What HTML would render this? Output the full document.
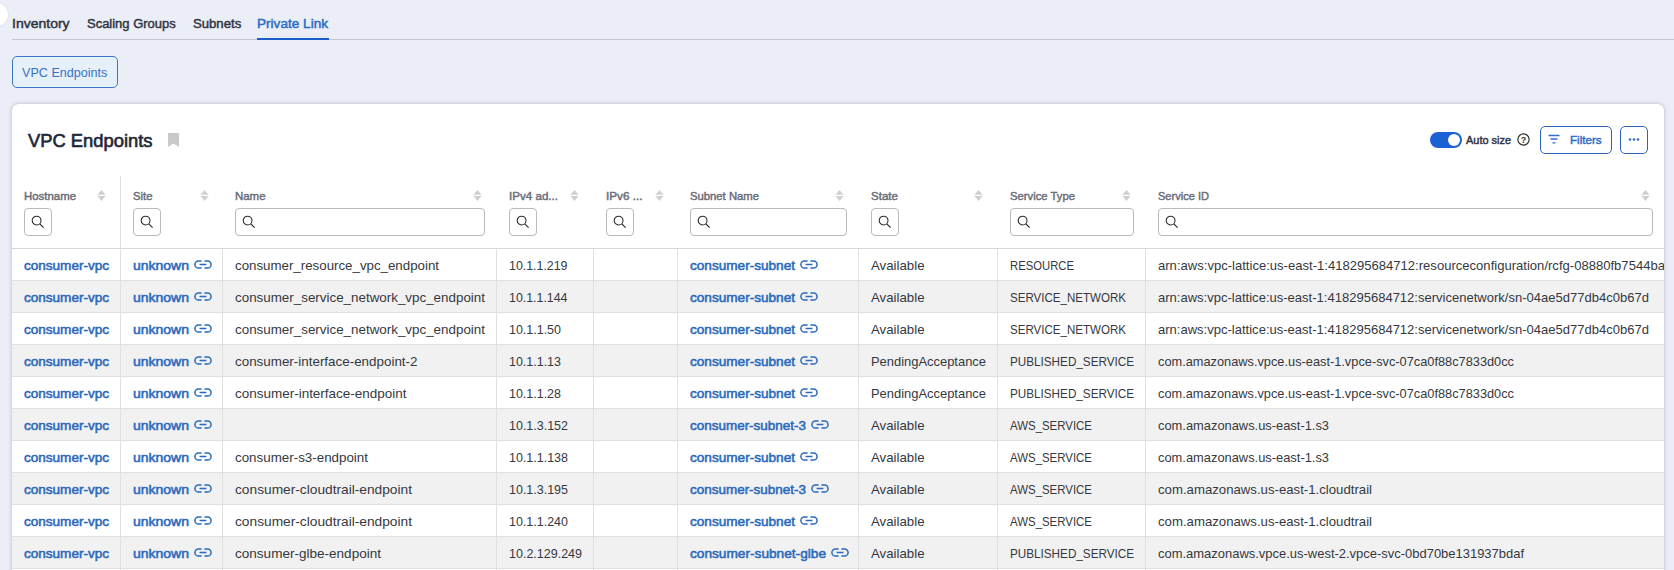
<!DOCTYPE html>
<html><head><meta charset="utf-8"><style>
*{box-sizing:border-box;margin:0;padding:0}
html,body{width:1674px;height:570px;overflow:hidden;background:#ebeef6;font-family:"Liberation Sans", sans-serif;position:relative}
.a{position:absolute}
.t{position:absolute;white-space:pre;transform-origin:0 0}
.ic{position:absolute}
.sb{position:absolute;top:208px;height:28px;border:1px solid #b9b9bd;border-radius:4px;background:#fff}
.sb svg{position:absolute;left:6px;top:6px}
.clip{position:absolute;left:0;top:0;width:1664px;height:570px;overflow:hidden}
</style></head><body>
<div class="a" style="left:-15px;top:3px;width:23px;height:23px;border-radius:50%;background:#fff;box-shadow:0 0 2px rgba(0,0,0,.12)"></div>
<div class="a" style="left:12px;top:39px;width:1662px;height:1px;background:#c5c8ce"></div>
<div class="a" style="left:257px;top:38px;width:72px;height:2px;background:#1a5cc8"></div>
<div class="a" style="left:12px;top:56px;width:106px;height:32px;border:1.5px solid #3c76c6;border-radius:5px;background:#e6f0fb"></div>
<div class="a" style="left:12px;top:104px;width:1652px;height:520px;background:#fff;border-radius:6px;box-shadow:0 0 5px rgba(0,0,0,.18),0 0 1px rgba(0,0,0,.22)"></div>
<svg class="ic" style="left:168px;top:133px" width="11" height="14" viewBox="0 0 11 14"><path d="M0 0H11V14L5.5 10.5L0 14Z" fill="#c9c9c9"/></svg>
<div class="a" style="left:1430px;top:132px;width:32px;height:16px;border-radius:8px;background:#1a62d4"></div>
<div class="a" style="left:1448px;top:134px;width:12px;height:12px;border-radius:50%;background:#fff"></div>
<svg class="ic" style="left:1517px;top:133px" width="13" height="13" viewBox="0 0 13 13"><circle cx="6.5" cy="6.5" r="5.6" fill="none" stroke="#333" stroke-width="1.2"/><text x="6.5" y="10" text-anchor="middle" font-family="Liberation Sans" font-weight="bold" font-size="9" fill="#333">?</text></svg>
<div class="a" style="left:1540px;top:126px;width:72px;height:28px;border:1.5px solid #2b67ba;border-radius:5px;background:#fff"></div>
<svg class="ic" style="left:1548px;top:134px" width="12" height="11" viewBox="0 0 12 11"><path d="M0.5 1.5H11.5M2.5 5H9.5M4.5 8.8H7.5" stroke="#2f6fc6" stroke-width="1.3"/></svg>
<div class="a" style="left:1620px;top:126px;width:28px;height:28px;border:1.5px solid #2b67ba;border-radius:5px;background:#fff"></div>
<svg class="ic" style="left:1628px;top:137px" width="12" height="5" viewBox="0 0 12 5"><circle cx="2" cy="2.5" r="1.3" fill="#2f6fc6"/><circle cx="6" cy="2.5" r="1.3" fill="#2f6fc6"/><circle cx="10" cy="2.5" r="1.3" fill="#2f6fc6"/></svg>

<div class="sb" style="left:24px;width:28px"><svg width="14" height="14" viewBox="0 0 14 14"><circle cx="5.6" cy="5.6" r="4.4" fill="none" stroke="#2a2a2a" stroke-width="1.05"/><path d="M8.8 8.8L12.6 12.6" stroke="#2a2a2a" stroke-width="1.2"/></svg></div>
<svg class="ic" style="left:97px;top:190px" width="9" height="12" viewBox="0 0 9 12"><path d="M4.5 0L8.6 4.8H0.4Z M0.4 6.1H8.6L4.5 10.9Z" fill="#cfd0d4"/></svg>
<div class="sb" style="left:133px;width:28px"><svg width="14" height="14" viewBox="0 0 14 14"><circle cx="5.6" cy="5.6" r="4.4" fill="none" stroke="#2a2a2a" stroke-width="1.05"/><path d="M8.8 8.8L12.6 12.6" stroke="#2a2a2a" stroke-width="1.2"/></svg></div>
<svg class="ic" style="left:199.5px;top:190px" width="9" height="12" viewBox="0 0 9 12"><path d="M4.5 0L8.6 4.8H0.4Z M0.4 6.1H8.6L4.5 10.9Z" fill="#cfd0d4"/></svg>
<div class="sb" style="left:235px;width:250px"><svg width="14" height="14" viewBox="0 0 14 14"><circle cx="5.6" cy="5.6" r="4.4" fill="none" stroke="#2a2a2a" stroke-width="1.05"/><path d="M8.8 8.8L12.6 12.6" stroke="#2a2a2a" stroke-width="1.2"/></svg></div>
<svg class="ic" style="left:473px;top:190px" width="9" height="12" viewBox="0 0 9 12"><path d="M4.5 0L8.6 4.8H0.4Z M0.4 6.1H8.6L4.5 10.9Z" fill="#cfd0d4"/></svg>
<div class="sb" style="left:509px;width:28px"><svg width="14" height="14" viewBox="0 0 14 14"><circle cx="5.6" cy="5.6" r="4.4" fill="none" stroke="#2a2a2a" stroke-width="1.05"/><path d="M8.8 8.8L12.6 12.6" stroke="#2a2a2a" stroke-width="1.2"/></svg></div>
<svg class="ic" style="left:570px;top:190px" width="9" height="12" viewBox="0 0 9 12"><path d="M4.5 0L8.6 4.8H0.4Z M0.4 6.1H8.6L4.5 10.9Z" fill="#cfd0d4"/></svg>
<div class="sb" style="left:606px;width:28px"><svg width="14" height="14" viewBox="0 0 14 14"><circle cx="5.6" cy="5.6" r="4.4" fill="none" stroke="#2a2a2a" stroke-width="1.05"/><path d="M8.8 8.8L12.6 12.6" stroke="#2a2a2a" stroke-width="1.2"/></svg></div>
<svg class="ic" style="left:654.5px;top:190px" width="9" height="12" viewBox="0 0 9 12"><path d="M4.5 0L8.6 4.8H0.4Z M0.4 6.1H8.6L4.5 10.9Z" fill="#cfd0d4"/></svg>
<div class="sb" style="left:690px;width:157px"><svg width="14" height="14" viewBox="0 0 14 14"><circle cx="5.6" cy="5.6" r="4.4" fill="none" stroke="#2a2a2a" stroke-width="1.05"/><path d="M8.8 8.8L12.6 12.6" stroke="#2a2a2a" stroke-width="1.2"/></svg></div>
<svg class="ic" style="left:835px;top:190px" width="9" height="12" viewBox="0 0 9 12"><path d="M4.5 0L8.6 4.8H0.4Z M0.4 6.1H8.6L4.5 10.9Z" fill="#cfd0d4"/></svg>
<div class="sb" style="left:871px;width:28px"><svg width="14" height="14" viewBox="0 0 14 14"><circle cx="5.6" cy="5.6" r="4.4" fill="none" stroke="#2a2a2a" stroke-width="1.05"/><path d="M8.8 8.8L12.6 12.6" stroke="#2a2a2a" stroke-width="1.2"/></svg></div>
<svg class="ic" style="left:974px;top:190px" width="9" height="12" viewBox="0 0 9 12"><path d="M4.5 0L8.6 4.8H0.4Z M0.4 6.1H8.6L4.5 10.9Z" fill="#cfd0d4"/></svg>
<div class="sb" style="left:1010px;width:124px"><svg width="14" height="14" viewBox="0 0 14 14"><circle cx="5.6" cy="5.6" r="4.4" fill="none" stroke="#2a2a2a" stroke-width="1.05"/><path d="M8.8 8.8L12.6 12.6" stroke="#2a2a2a" stroke-width="1.2"/></svg></div>
<svg class="ic" style="left:1122px;top:190px" width="9" height="12" viewBox="0 0 9 12"><path d="M4.5 0L8.6 4.8H0.4Z M0.4 6.1H8.6L4.5 10.9Z" fill="#cfd0d4"/></svg>
<div class="sb" style="left:1158px;width:495px"><svg width="14" height="14" viewBox="0 0 14 14"><circle cx="5.6" cy="5.6" r="4.4" fill="none" stroke="#2a2a2a" stroke-width="1.05"/><path d="M8.8 8.8L12.6 12.6" stroke="#2a2a2a" stroke-width="1.2"/></svg></div>
<svg class="ic" style="left:1641px;top:190px" width="9" height="12" viewBox="0 0 9 12"><path d="M4.5 0L8.6 4.8H0.4Z M0.4 6.1H8.6L4.5 10.9Z" fill="#cfd0d4"/></svg>
<div class="a" style="left:12px;top:248px;width:1652px;height:1px;background:#d6d6d6"></div>
<div class="a" style="left:120px;top:176px;width:1px;height:72px;background:#e0e0e0"></div>
<div class="a" style="left:12px;top:249px;width:1652px;height:31px;background:#fff"></div>
<div class="a" style="left:12px;top:280px;width:1652px;height:1px;background:#e0e0e0"></div>
<div class="a" style="left:12px;top:281px;width:1652px;height:31px;background:#f1f1f1"></div>
<div class="a" style="left:12px;top:312px;width:1652px;height:1px;background:#e0e0e0"></div>
<div class="a" style="left:12px;top:313px;width:1652px;height:31px;background:#fff"></div>
<div class="a" style="left:12px;top:344px;width:1652px;height:1px;background:#e0e0e0"></div>
<div class="a" style="left:12px;top:345px;width:1652px;height:31px;background:#f1f1f1"></div>
<div class="a" style="left:12px;top:376px;width:1652px;height:1px;background:#e0e0e0"></div>
<div class="a" style="left:12px;top:377px;width:1652px;height:31px;background:#fff"></div>
<div class="a" style="left:12px;top:408px;width:1652px;height:1px;background:#e0e0e0"></div>
<div class="a" style="left:12px;top:409px;width:1652px;height:31px;background:#f1f1f1"></div>
<div class="a" style="left:12px;top:440px;width:1652px;height:1px;background:#e0e0e0"></div>
<div class="a" style="left:12px;top:441px;width:1652px;height:31px;background:#fff"></div>
<div class="a" style="left:12px;top:472px;width:1652px;height:1px;background:#e0e0e0"></div>
<div class="a" style="left:12px;top:473px;width:1652px;height:31px;background:#f1f1f1"></div>
<div class="a" style="left:12px;top:504px;width:1652px;height:1px;background:#e0e0e0"></div>
<div class="a" style="left:12px;top:505px;width:1652px;height:31px;background:#fff"></div>
<div class="a" style="left:12px;top:536px;width:1652px;height:1px;background:#e0e0e0"></div>
<div class="a" style="left:12px;top:537px;width:1652px;height:31px;background:#f1f1f1"></div>
<div class="a" style="left:12px;top:568px;width:1652px;height:1px;background:#e0e0e0"></div>
<div class="a" style="left:120px;top:249px;width:1px;height:321px;background:#e0e0e0"></div>
<div class="a" style="left:222px;top:249px;width:1px;height:321px;background:#e0e0e0"></div>
<div class="a" style="left:496px;top:249px;width:1px;height:321px;background:#e0e0e0"></div>
<div class="a" style="left:593px;top:249px;width:1px;height:321px;background:#e0e0e0"></div>
<div class="a" style="left:677px;top:249px;width:1px;height:321px;background:#e0e0e0"></div>
<div class="a" style="left:858px;top:249px;width:1px;height:321px;background:#e0e0e0"></div>
<div class="a" style="left:997px;top:249px;width:1px;height:321px;background:#e0e0e0"></div>
<div class="a" style="left:1145px;top:249px;width:1px;height:321px;background:#e0e0e0"></div>
<div class="clip">
<div class="t" style="left:12px;top:17px;font-size:13px;line-height:13px;font-weight:normal;-webkit-text-stroke:0.45px #2f3441;color:#2f3441;transform:scaleX(1.0770)">Inventory</div>
<div class="t" style="left:87px;top:17px;font-size:13px;line-height:13px;font-weight:normal;-webkit-text-stroke:0.45px #2f3441;color:#2f3441;transform:scaleX(0.9979)">Scaling Groups</div>
<div class="t" style="left:193px;top:17px;font-size:13px;line-height:13px;font-weight:normal;-webkit-text-stroke:0.45px #2f3441;color:#2f3441;transform:scaleX(1.0104)">Subnets</div>
<div class="t" style="left:257px;top:17px;font-size:13px;line-height:13px;font-weight:normal;-webkit-text-stroke:0.45px #2c6cc4;color:#2c6cc4;transform:scaleX(1.0453)">Private Link</div>
<div class="t" style="left:22px;top:66px;font-size:13px;line-height:13px;font-weight:normal;color:#3a72c2;transform:scaleX(0.9686)">VPC Endpoints</div>
<div class="t" style="left:28px;top:133px;font-size:17.5px;line-height:17.5px;font-weight:normal;-webkit-text-stroke:0.6px #1f2738;color:#1f2738;transform:scaleX(1.0490)">VPC Endpoints</div>
<div class="t" style="left:1466px;top:135px;font-size:11px;line-height:11px;font-weight:normal;-webkit-text-stroke:0.45px #2f3441;color:#2f3441;transform:scaleX(0.9945)">Auto size</div>
<div class="t" style="left:1570px;top:135px;font-size:11.5px;line-height:11.5px;font-weight:normal;-webkit-text-stroke:0.45px #2c6cc4;color:#2c6cc4;transform:scaleX(1.0092)">Filters</div>
<div class="t" style="left:24px;top:191px;font-size:11.5px;line-height:11.5px;font-weight:normal;-webkit-text-stroke:0.45px #6a6d78;color:#6a6d78;transform:scaleX(0.9920)">Hostname</div>
<div class="t" style="left:133px;top:191px;font-size:11.5px;line-height:11.5px;font-weight:normal;-webkit-text-stroke:0.45px #6a6d78;color:#6a6d78;transform:scaleX(0.9835)">Site</div>
<div class="t" style="left:235px;top:191px;font-size:11.5px;line-height:11.5px;font-weight:normal;-webkit-text-stroke:0.45px #6a6d78;color:#6a6d78;transform:scaleX(0.9939)">Name</div>
<div class="t" style="left:509px;top:191px;font-size:11.5px;line-height:11.5px;font-weight:normal;-webkit-text-stroke:0.45px #6a6d78;color:#6a6d78;transform:scaleX(1.0084)">IPv4 ad...</div>
<div class="t" style="left:606px;top:191px;font-size:11.5px;line-height:11.5px;font-weight:normal;-webkit-text-stroke:0.45px #6a6d78;color:#6a6d78;transform:scaleX(1.0196)">IPv6 ...</div>
<div class="t" style="left:690px;top:191px;font-size:11.5px;line-height:11.5px;font-weight:normal;-webkit-text-stroke:0.45px #6a6d78;color:#6a6d78;transform:scaleX(0.9811)">Subnet Name</div>
<div class="t" style="left:871px;top:191px;font-size:11.5px;line-height:11.5px;font-weight:normal;-webkit-text-stroke:0.45px #6a6d78;color:#6a6d78;transform:scaleX(1.0052)">State</div>
<div class="t" style="left:1010px;top:191px;font-size:11.5px;line-height:11.5px;font-weight:normal;-webkit-text-stroke:0.45px #6a6d78;color:#6a6d78;transform:scaleX(0.9809)">Service Type</div>
<div class="t" style="left:1158px;top:191px;font-size:11.5px;line-height:11.5px;font-weight:normal;-webkit-text-stroke:0.45px #6a6d78;color:#6a6d78;transform:scaleX(0.9614)">Service ID</div>
<div class="t" style="left:24px;top:259px;font-size:13.5px;line-height:13.5px;font-weight:normal;-webkit-text-stroke:0.55px #2a69bc;color:#2a69bc;transform:scaleX(1.0026)">consumer-vpc</div>
<div class="t" style="left:133px;top:259px;font-size:13.5px;line-height:13.5px;font-weight:normal;-webkit-text-stroke:0.55px #2a69bc;color:#2a69bc;transform:scaleX(1.0361)">unknown</div>
<div class="t" style="left:235px;top:259px;font-size:13.5px;line-height:13.5px;font-weight:normal;color:#35383e;transform:scaleX(0.9848)">consumer_resource_vpc_endpoint</div>
<div class="t" style="left:509px;top:259px;font-size:13.5px;line-height:13.5px;font-weight:normal;color:#35383e;transform:scaleX(0.9167)">10.1.1.219</div>
<div class="t" style="left:690px;top:259px;font-size:13.5px;line-height:13.5px;font-weight:normal;-webkit-text-stroke:0.55px #2a69bc;color:#2a69bc;transform:scaleX(1.0066)">consumer-subnet</div>
<div class="t" style="left:871px;top:259px;font-size:13.5px;line-height:13.5px;font-weight:normal;color:#35383e;transform:scaleX(0.9808)">Available</div>
<div class="t" style="left:1010px;top:259px;font-size:13.5px;line-height:13.5px;font-weight:normal;color:#35383e;transform:scaleX(0.8364)">RESOURCE</div>
<div class="t" style="left:1158px;top:259px;font-size:13.5px;line-height:13.5px;font-weight:normal;color:#35383e;transform:scaleX(0.9678)">arn:aws:vpc-lattice:us-east-1:418295684712:resourceconfiguration/rcfg-08880fb7544ba</div>
<div class="t" style="left:24px;top:291px;font-size:13.5px;line-height:13.5px;font-weight:normal;-webkit-text-stroke:0.55px #2a69bc;color:#2a69bc;transform:scaleX(1.0026)">consumer-vpc</div>
<div class="t" style="left:133px;top:291px;font-size:13.5px;line-height:13.5px;font-weight:normal;-webkit-text-stroke:0.55px #2a69bc;color:#2a69bc;transform:scaleX(1.0361)">unknown</div>
<div class="t" style="left:235px;top:291px;font-size:13.5px;line-height:13.5px;font-weight:normal;color:#35383e;transform:scaleX(0.9914)">consumer_service_network_vpc_endpoint</div>
<div class="t" style="left:509px;top:291px;font-size:13.5px;line-height:13.5px;font-weight:normal;color:#35383e;transform:scaleX(0.9167)">10.1.1.144</div>
<div class="t" style="left:690px;top:291px;font-size:13.5px;line-height:13.5px;font-weight:normal;-webkit-text-stroke:0.55px #2a69bc;color:#2a69bc;transform:scaleX(1.0066)">consumer-subnet</div>
<div class="t" style="left:871px;top:291px;font-size:13.5px;line-height:13.5px;font-weight:normal;color:#35383e;transform:scaleX(0.9808)">Available</div>
<div class="t" style="left:1010px;top:291px;font-size:13.5px;line-height:13.5px;font-weight:normal;color:#35383e;transform:scaleX(0.8559)">SERVICE_NETWORK</div>
<div class="t" style="left:1158px;top:291px;font-size:13.5px;line-height:13.5px;font-weight:normal;color:#35383e;transform:scaleX(0.9650)">arn:aws:vpc-lattice:us-east-1:418295684712:servicenetwork/sn-04ae5d77db4c0b67d</div>
<div class="t" style="left:24px;top:323px;font-size:13.5px;line-height:13.5px;font-weight:normal;-webkit-text-stroke:0.55px #2a69bc;color:#2a69bc;transform:scaleX(1.0026)">consumer-vpc</div>
<div class="t" style="left:133px;top:323px;font-size:13.5px;line-height:13.5px;font-weight:normal;-webkit-text-stroke:0.55px #2a69bc;color:#2a69bc;transform:scaleX(1.0361)">unknown</div>
<div class="t" style="left:235px;top:323px;font-size:13.5px;line-height:13.5px;font-weight:normal;color:#35383e;transform:scaleX(0.9914)">consumer_service_network_vpc_endpoint</div>
<div class="t" style="left:509px;top:323px;font-size:13.5px;line-height:13.5px;font-weight:normal;color:#35383e;transform:scaleX(0.9234)">10.1.1.50</div>
<div class="t" style="left:690px;top:323px;font-size:13.5px;line-height:13.5px;font-weight:normal;-webkit-text-stroke:0.55px #2a69bc;color:#2a69bc;transform:scaleX(1.0066)">consumer-subnet</div>
<div class="t" style="left:871px;top:323px;font-size:13.5px;line-height:13.5px;font-weight:normal;color:#35383e;transform:scaleX(0.9808)">Available</div>
<div class="t" style="left:1010px;top:323px;font-size:13.5px;line-height:13.5px;font-weight:normal;color:#35383e;transform:scaleX(0.8559)">SERVICE_NETWORK</div>
<div class="t" style="left:1158px;top:323px;font-size:13.5px;line-height:13.5px;font-weight:normal;color:#35383e;transform:scaleX(0.9650)">arn:aws:vpc-lattice:us-east-1:418295684712:servicenetwork/sn-04ae5d77db4c0b67d</div>
<div class="t" style="left:24px;top:355px;font-size:13.5px;line-height:13.5px;font-weight:normal;-webkit-text-stroke:0.55px #2a69bc;color:#2a69bc;transform:scaleX(1.0026)">consumer-vpc</div>
<div class="t" style="left:133px;top:355px;font-size:13.5px;line-height:13.5px;font-weight:normal;-webkit-text-stroke:0.55px #2a69bc;color:#2a69bc;transform:scaleX(1.0361)">unknown</div>
<div class="t" style="left:235px;top:355px;font-size:13.5px;line-height:13.5px;font-weight:normal;color:#35383e;transform:scaleX(0.9926)">consumer-interface-endpoint-2</div>
<div class="t" style="left:509px;top:355px;font-size:13.5px;line-height:13.5px;font-weight:normal;color:#35383e;transform:scaleX(0.9234)">10.1.1.13</div>
<div class="t" style="left:690px;top:355px;font-size:13.5px;line-height:13.5px;font-weight:normal;-webkit-text-stroke:0.55px #2a69bc;color:#2a69bc;transform:scaleX(1.0066)">consumer-subnet</div>
<div class="t" style="left:871px;top:355px;font-size:13.5px;line-height:13.5px;font-weight:normal;color:#35383e;transform:scaleX(0.9576)">PendingAcceptance</div>
<div class="t" style="left:1010px;top:355px;font-size:13.5px;line-height:13.5px;font-weight:normal;color:#35383e;transform:scaleX(0.8668)">PUBLISHED_SERVICE</div>
<div class="t" style="left:1158px;top:355px;font-size:13.5px;line-height:13.5px;font-weight:normal;color:#35383e;transform:scaleX(0.9470)">com.amazonaws.vpce.us-east-1.vpce-svc-07ca0f88c7833d0cc</div>
<div class="t" style="left:24px;top:387px;font-size:13.5px;line-height:13.5px;font-weight:normal;-webkit-text-stroke:0.55px #2a69bc;color:#2a69bc;transform:scaleX(1.0026)">consumer-vpc</div>
<div class="t" style="left:133px;top:387px;font-size:13.5px;line-height:13.5px;font-weight:normal;-webkit-text-stroke:0.55px #2a69bc;color:#2a69bc;transform:scaleX(1.0361)">unknown</div>
<div class="t" style="left:235px;top:387px;font-size:13.5px;line-height:13.5px;font-weight:normal;color:#35383e;transform:scaleX(0.9980)">consumer-interface-endpoint</div>
<div class="t" style="left:509px;top:387px;font-size:13.5px;line-height:13.5px;font-weight:normal;color:#35383e;transform:scaleX(0.9234)">10.1.1.28</div>
<div class="t" style="left:690px;top:387px;font-size:13.5px;line-height:13.5px;font-weight:normal;-webkit-text-stroke:0.55px #2a69bc;color:#2a69bc;transform:scaleX(1.0066)">consumer-subnet</div>
<div class="t" style="left:871px;top:387px;font-size:13.5px;line-height:13.5px;font-weight:normal;color:#35383e;transform:scaleX(0.9576)">PendingAcceptance</div>
<div class="t" style="left:1010px;top:387px;font-size:13.5px;line-height:13.5px;font-weight:normal;color:#35383e;transform:scaleX(0.8668)">PUBLISHED_SERVICE</div>
<div class="t" style="left:1158px;top:387px;font-size:13.5px;line-height:13.5px;font-weight:normal;color:#35383e;transform:scaleX(0.9470)">com.amazonaws.vpce.us-east-1.vpce-svc-07ca0f88c7833d0cc</div>
<div class="t" style="left:24px;top:419px;font-size:13.5px;line-height:13.5px;font-weight:normal;-webkit-text-stroke:0.55px #2a69bc;color:#2a69bc;transform:scaleX(1.0026)">consumer-vpc</div>
<div class="t" style="left:133px;top:419px;font-size:13.5px;line-height:13.5px;font-weight:normal;-webkit-text-stroke:0.55px #2a69bc;color:#2a69bc;transform:scaleX(1.0361)">unknown</div>
<div class="t" style="left:509px;top:419px;font-size:13.5px;line-height:13.5px;font-weight:normal;color:#35383e;transform:scaleX(0.9246)">10.1.3.152</div>
<div class="t" style="left:690px;top:419px;font-size:13.5px;line-height:13.5px;font-weight:normal;-webkit-text-stroke:0.55px #2a69bc;color:#2a69bc;transform:scaleX(0.9973)">consumer-subnet-3</div>
<div class="t" style="left:871px;top:419px;font-size:13.5px;line-height:13.5px;font-weight:normal;color:#35383e;transform:scaleX(0.9808)">Available</div>
<div class="t" style="left:1010px;top:419px;font-size:13.5px;line-height:13.5px;font-weight:normal;color:#35383e;transform:scaleX(0.8473)">AWS_SERVICE</div>
<div class="t" style="left:1158px;top:419px;font-size:13.5px;line-height:13.5px;font-weight:normal;color:#35383e;transform:scaleX(0.9536)">com.amazonaws.us-east-1.s3</div>
<div class="t" style="left:24px;top:451px;font-size:13.5px;line-height:13.5px;font-weight:normal;-webkit-text-stroke:0.55px #2a69bc;color:#2a69bc;transform:scaleX(1.0026)">consumer-vpc</div>
<div class="t" style="left:133px;top:451px;font-size:13.5px;line-height:13.5px;font-weight:normal;-webkit-text-stroke:0.55px #2a69bc;color:#2a69bc;transform:scaleX(1.0361)">unknown</div>
<div class="t" style="left:235px;top:451px;font-size:13.5px;line-height:13.5px;font-weight:normal;color:#35383e;transform:scaleX(0.9901)">consumer-s3-endpoint</div>
<div class="t" style="left:509px;top:451px;font-size:13.5px;line-height:13.5px;font-weight:normal;color:#35383e;transform:scaleX(0.9246)">10.1.1.138</div>
<div class="t" style="left:690px;top:451px;font-size:13.5px;line-height:13.5px;font-weight:normal;-webkit-text-stroke:0.55px #2a69bc;color:#2a69bc;transform:scaleX(1.0066)">consumer-subnet</div>
<div class="t" style="left:871px;top:451px;font-size:13.5px;line-height:13.5px;font-weight:normal;color:#35383e;transform:scaleX(0.9808)">Available</div>
<div class="t" style="left:1010px;top:451px;font-size:13.5px;line-height:13.5px;font-weight:normal;color:#35383e;transform:scaleX(0.8473)">AWS_SERVICE</div>
<div class="t" style="left:1158px;top:451px;font-size:13.5px;line-height:13.5px;font-weight:normal;color:#35383e;transform:scaleX(0.9536)">com.amazonaws.us-east-1.s3</div>
<div class="t" style="left:24px;top:483px;font-size:13.5px;line-height:13.5px;font-weight:normal;-webkit-text-stroke:0.55px #2a69bc;color:#2a69bc;transform:scaleX(1.0026)">consumer-vpc</div>
<div class="t" style="left:133px;top:483px;font-size:13.5px;line-height:13.5px;font-weight:normal;-webkit-text-stroke:0.55px #2a69bc;color:#2a69bc;transform:scaleX(1.0361)">unknown</div>
<div class="t" style="left:235px;top:483px;font-size:13.5px;line-height:13.5px;font-weight:normal;color:#35383e;transform:scaleX(1.0167)">consumer-cloudtrail-endpoint</div>
<div class="t" style="left:509px;top:483px;font-size:13.5px;line-height:13.5px;font-weight:normal;color:#35383e;transform:scaleX(0.9246)">10.1.3.195</div>
<div class="t" style="left:690px;top:483px;font-size:13.5px;line-height:13.5px;font-weight:normal;-webkit-text-stroke:0.55px #2a69bc;color:#2a69bc;transform:scaleX(0.9973)">consumer-subnet-3</div>
<div class="t" style="left:871px;top:483px;font-size:13.5px;line-height:13.5px;font-weight:normal;color:#35383e;transform:scaleX(0.9808)">Available</div>
<div class="t" style="left:1010px;top:483px;font-size:13.5px;line-height:13.5px;font-weight:normal;color:#35383e;transform:scaleX(0.8473)">AWS_SERVICE</div>
<div class="t" style="left:1158px;top:483px;font-size:13.5px;line-height:13.5px;font-weight:normal;color:#35383e;transform:scaleX(0.9768)">com.amazonaws.us-east-1.cloudtrail</div>
<div class="t" style="left:24px;top:515px;font-size:13.5px;line-height:13.5px;font-weight:normal;-webkit-text-stroke:0.55px #2a69bc;color:#2a69bc;transform:scaleX(1.0026)">consumer-vpc</div>
<div class="t" style="left:133px;top:515px;font-size:13.5px;line-height:13.5px;font-weight:normal;-webkit-text-stroke:0.55px #2a69bc;color:#2a69bc;transform:scaleX(1.0361)">unknown</div>
<div class="t" style="left:235px;top:515px;font-size:13.5px;line-height:13.5px;font-weight:normal;color:#35383e;transform:scaleX(1.0167)">consumer-cloudtrail-endpoint</div>
<div class="t" style="left:509px;top:515px;font-size:13.5px;line-height:13.5px;font-weight:normal;color:#35383e;transform:scaleX(0.9246)">10.1.1.240</div>
<div class="t" style="left:690px;top:515px;font-size:13.5px;line-height:13.5px;font-weight:normal;-webkit-text-stroke:0.55px #2a69bc;color:#2a69bc;transform:scaleX(1.0066)">consumer-subnet</div>
<div class="t" style="left:871px;top:515px;font-size:13.5px;line-height:13.5px;font-weight:normal;color:#35383e;transform:scaleX(0.9808)">Available</div>
<div class="t" style="left:1010px;top:515px;font-size:13.5px;line-height:13.5px;font-weight:normal;color:#35383e;transform:scaleX(0.8473)">AWS_SERVICE</div>
<div class="t" style="left:1158px;top:515px;font-size:13.5px;line-height:13.5px;font-weight:normal;color:#35383e;transform:scaleX(0.9768)">com.amazonaws.us-east-1.cloudtrail</div>
<div class="t" style="left:24px;top:547px;font-size:13.5px;line-height:13.5px;font-weight:normal;-webkit-text-stroke:0.55px #2a69bc;color:#2a69bc;transform:scaleX(1.0026)">consumer-vpc</div>
<div class="t" style="left:133px;top:547px;font-size:13.5px;line-height:13.5px;font-weight:normal;-webkit-text-stroke:0.55px #2a69bc;color:#2a69bc;transform:scaleX(1.0361)">unknown</div>
<div class="t" style="left:235px;top:547px;font-size:13.5px;line-height:13.5px;font-weight:normal;color:#35383e;transform:scaleX(1.0028)">consumer-glbe-endpoint</div>
<div class="t" style="left:509px;top:547px;font-size:13.5px;line-height:13.5px;font-weight:normal;color:#35383e;transform:scaleX(0.9261)">10.2.129.249</div>
<div class="t" style="left:690px;top:547px;font-size:13.5px;line-height:13.5px;font-weight:normal;-webkit-text-stroke:0.55px #2a69bc;color:#2a69bc;transform:scaleX(1.0124)">consumer-subnet-glbe</div>
<div class="t" style="left:871px;top:547px;font-size:13.5px;line-height:13.5px;font-weight:normal;color:#35383e;transform:scaleX(0.9808)">Available</div>
<div class="t" style="left:1010px;top:547px;font-size:13.5px;line-height:13.5px;font-weight:normal;color:#35383e;transform:scaleX(0.8668)">PUBLISHED_SERVICE</div>
<div class="t" style="left:1158px;top:547px;font-size:13.5px;line-height:13.5px;font-weight:normal;color:#35383e;transform:scaleX(0.9601)">com.amazonaws.vpce.us-west-2.vpce-svc-0bd70be131937bdaf</div>
</div>
<svg class="ic" style="left:193.5px;top:260px" width="18" height="9" viewBox="0 0 18 9"><path d="M7.6 0.9H4.5a3.6 3.6 0 0 0 0 7.2H7.6M10.4 0.9h3.1a3.6 3.6 0 0 1 0 7.2h-3.1M5.6 4.5h6.8" fill="none" stroke="#2a69bc" stroke-width="1.5"/></svg>
<svg class="ic" style="left:799.5px;top:260px" width="18" height="9" viewBox="0 0 18 9"><path d="M7.6 0.9H4.5a3.6 3.6 0 0 0 0 7.2H7.6M10.4 0.9h3.1a3.6 3.6 0 0 1 0 7.2h-3.1M5.6 4.5h6.8" fill="none" stroke="#2a69bc" stroke-width="1.5"/></svg>
<svg class="ic" style="left:193.5px;top:292px" width="18" height="9" viewBox="0 0 18 9"><path d="M7.6 0.9H4.5a3.6 3.6 0 0 0 0 7.2H7.6M10.4 0.9h3.1a3.6 3.6 0 0 1 0 7.2h-3.1M5.6 4.5h6.8" fill="none" stroke="#2a69bc" stroke-width="1.5"/></svg>
<svg class="ic" style="left:799.5px;top:292px" width="18" height="9" viewBox="0 0 18 9"><path d="M7.6 0.9H4.5a3.6 3.6 0 0 0 0 7.2H7.6M10.4 0.9h3.1a3.6 3.6 0 0 1 0 7.2h-3.1M5.6 4.5h6.8" fill="none" stroke="#2a69bc" stroke-width="1.5"/></svg>
<svg class="ic" style="left:193.5px;top:324px" width="18" height="9" viewBox="0 0 18 9"><path d="M7.6 0.9H4.5a3.6 3.6 0 0 0 0 7.2H7.6M10.4 0.9h3.1a3.6 3.6 0 0 1 0 7.2h-3.1M5.6 4.5h6.8" fill="none" stroke="#2a69bc" stroke-width="1.5"/></svg>
<svg class="ic" style="left:799.5px;top:324px" width="18" height="9" viewBox="0 0 18 9"><path d="M7.6 0.9H4.5a3.6 3.6 0 0 0 0 7.2H7.6M10.4 0.9h3.1a3.6 3.6 0 0 1 0 7.2h-3.1M5.6 4.5h6.8" fill="none" stroke="#2a69bc" stroke-width="1.5"/></svg>
<svg class="ic" style="left:193.5px;top:356px" width="18" height="9" viewBox="0 0 18 9"><path d="M7.6 0.9H4.5a3.6 3.6 0 0 0 0 7.2H7.6M10.4 0.9h3.1a3.6 3.6 0 0 1 0 7.2h-3.1M5.6 4.5h6.8" fill="none" stroke="#2a69bc" stroke-width="1.5"/></svg>
<svg class="ic" style="left:799.5px;top:356px" width="18" height="9" viewBox="0 0 18 9"><path d="M7.6 0.9H4.5a3.6 3.6 0 0 0 0 7.2H7.6M10.4 0.9h3.1a3.6 3.6 0 0 1 0 7.2h-3.1M5.6 4.5h6.8" fill="none" stroke="#2a69bc" stroke-width="1.5"/></svg>
<svg class="ic" style="left:193.5px;top:388px" width="18" height="9" viewBox="0 0 18 9"><path d="M7.6 0.9H4.5a3.6 3.6 0 0 0 0 7.2H7.6M10.4 0.9h3.1a3.6 3.6 0 0 1 0 7.2h-3.1M5.6 4.5h6.8" fill="none" stroke="#2a69bc" stroke-width="1.5"/></svg>
<svg class="ic" style="left:799.5px;top:388px" width="18" height="9" viewBox="0 0 18 9"><path d="M7.6 0.9H4.5a3.6 3.6 0 0 0 0 7.2H7.6M10.4 0.9h3.1a3.6 3.6 0 0 1 0 7.2h-3.1M5.6 4.5h6.8" fill="none" stroke="#2a69bc" stroke-width="1.5"/></svg>
<svg class="ic" style="left:193.5px;top:420px" width="18" height="9" viewBox="0 0 18 9"><path d="M7.6 0.9H4.5a3.6 3.6 0 0 0 0 7.2H7.6M10.4 0.9h3.1a3.6 3.6 0 0 1 0 7.2h-3.1M5.6 4.5h6.8" fill="none" stroke="#2a69bc" stroke-width="1.5"/></svg>
<svg class="ic" style="left:810.5px;top:420px" width="18" height="9" viewBox="0 0 18 9"><path d="M7.6 0.9H4.5a3.6 3.6 0 0 0 0 7.2H7.6M10.4 0.9h3.1a3.6 3.6 0 0 1 0 7.2h-3.1M5.6 4.5h6.8" fill="none" stroke="#2a69bc" stroke-width="1.5"/></svg>
<svg class="ic" style="left:193.5px;top:452px" width="18" height="9" viewBox="0 0 18 9"><path d="M7.6 0.9H4.5a3.6 3.6 0 0 0 0 7.2H7.6M10.4 0.9h3.1a3.6 3.6 0 0 1 0 7.2h-3.1M5.6 4.5h6.8" fill="none" stroke="#2a69bc" stroke-width="1.5"/></svg>
<svg class="ic" style="left:799.5px;top:452px" width="18" height="9" viewBox="0 0 18 9"><path d="M7.6 0.9H4.5a3.6 3.6 0 0 0 0 7.2H7.6M10.4 0.9h3.1a3.6 3.6 0 0 1 0 7.2h-3.1M5.6 4.5h6.8" fill="none" stroke="#2a69bc" stroke-width="1.5"/></svg>
<svg class="ic" style="left:193.5px;top:484px" width="18" height="9" viewBox="0 0 18 9"><path d="M7.6 0.9H4.5a3.6 3.6 0 0 0 0 7.2H7.6M10.4 0.9h3.1a3.6 3.6 0 0 1 0 7.2h-3.1M5.6 4.5h6.8" fill="none" stroke="#2a69bc" stroke-width="1.5"/></svg>
<svg class="ic" style="left:810.5px;top:484px" width="18" height="9" viewBox="0 0 18 9"><path d="M7.6 0.9H4.5a3.6 3.6 0 0 0 0 7.2H7.6M10.4 0.9h3.1a3.6 3.6 0 0 1 0 7.2h-3.1M5.6 4.5h6.8" fill="none" stroke="#2a69bc" stroke-width="1.5"/></svg>
<svg class="ic" style="left:193.5px;top:516px" width="18" height="9" viewBox="0 0 18 9"><path d="M7.6 0.9H4.5a3.6 3.6 0 0 0 0 7.2H7.6M10.4 0.9h3.1a3.6 3.6 0 0 1 0 7.2h-3.1M5.6 4.5h6.8" fill="none" stroke="#2a69bc" stroke-width="1.5"/></svg>
<svg class="ic" style="left:799.5px;top:516px" width="18" height="9" viewBox="0 0 18 9"><path d="M7.6 0.9H4.5a3.6 3.6 0 0 0 0 7.2H7.6M10.4 0.9h3.1a3.6 3.6 0 0 1 0 7.2h-3.1M5.6 4.5h6.8" fill="none" stroke="#2a69bc" stroke-width="1.5"/></svg>
<svg class="ic" style="left:193.5px;top:548px" width="18" height="9" viewBox="0 0 18 9"><path d="M7.6 0.9H4.5a3.6 3.6 0 0 0 0 7.2H7.6M10.4 0.9h3.1a3.6 3.6 0 0 1 0 7.2h-3.1M5.6 4.5h6.8" fill="none" stroke="#2a69bc" stroke-width="1.5"/></svg>
<svg class="ic" style="left:830.5px;top:548px" width="18" height="9" viewBox="0 0 18 9"><path d="M7.6 0.9H4.5a3.6 3.6 0 0 0 0 7.2H7.6M10.4 0.9h3.1a3.6 3.6 0 0 1 0 7.2h-3.1M5.6 4.5h6.8" fill="none" stroke="#2a69bc" stroke-width="1.5"/></svg>
</body></html>
